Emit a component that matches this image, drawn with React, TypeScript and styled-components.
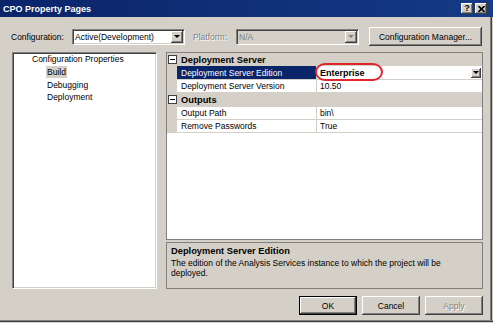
import React from "react";
import styled, { createGlobalStyle } from "styled-components";

const GlobalStyle = createGlobalStyle`
  html, body { margin: 0; padding: 0; background: #d4d0c8; overflow: hidden; }
  body { font-family: "Liberation Sans", Arial, sans-serif; font-size: 8.5px; color: #000; }
  * { box-sizing: border-box; }
`;

const raised = `
  background: #d4d0c8;
  box-shadow: inset -1px -1px #404040, inset 1px 1px #ffffff, inset -2px -2px #808080, inset 2px 2px #d4d0c8;
`;

const Window = styled.div`
  width: 493px;
  height: 323px;
  background: #d4d0c8;
  display: flex;
  flex-direction: column;
  box-shadow: inset 0 -1px #d4d0c8, inset 0 -2px #404040, inset 0 -3px #808080,
    inset -1px 0 #d4d0c8, inset -2px 0 #404040, inset -3px 0 #808080;
`;

const TitleBar = styled.div`
  height: 17px;
  flex: none;
  display: flex;
  align-items: center;
  justify-content: space-between;
  padding: 0 6px 0 3px;
  background: linear-gradient(90deg, #0a246a 0%, #153a86 100%);
`;

const Title = styled.span`
  color: #fff;
  font-weight: bold;
  font-size: 9px;
`;

const CaptionGroup = styled.div`
  display: flex;
  gap: 2px;
`;

const CaptionButton = styled.div`
  ${raised}
  width: 12px;
  height: 11px;
  display: flex;
  align-items: center;
  justify-content: center;
  font-weight: bold;
  font-size: 9px;
  line-height: 1;
`;

const Body = styled.div`
  flex: 1;
  display: flex;
  flex-direction: column;
  padding: 10px 10px 0 12px;
`;

const ConfigRow = styled.div`
  height: 19px;
  display: flex;
  align-items: center;
`;

const Label = styled.span<{ $disabled?: boolean; $width: number; $ml: number }>`
  width: ${(p) => p.$width}px;
  margin-left: ${(p) => p.$ml}px;
  color: ${(p) => (p.$disabled ? "#808080" : "#000")};
  text-shadow: ${(p) => (p.$disabled ? "1px 1px #ffffff" : "none")};
  white-space: nowrap;
`;

const Combo = styled.div<{ $disabled?: boolean; $width: number }>`
  width: ${(p) => p.$width}px;
  height: 16px;
  display: flex;
  align-items: center;
  padding-left: 2px;
  background: ${(p) => (p.$disabled ? "#d4d0c8" : "#fff")};
  color: ${(p) => (p.$disabled ? "#808080" : "#000")};
  border: 1px solid;
  border-color: #808080 #ffffff #ffffff #808080;
  box-shadow: inset 1px 1px #404040, inset -1px -1px #d4d0c8;
`;

const ComboText = styled.span`
  flex: 1;
  white-space: nowrap;
`;

const DropButton = styled.div<{ $size: number }>`
  ${raised}
  width: ${(p) => p.$size}px;
  height: ${(p) => p.$size}px;
  margin-right: 1px;
  display: flex;
  align-items: center;
  justify-content: center;
`;

const Arrow = styled.div<{ $disabled?: boolean }>`
  width: 0;
  height: 0;
  border-left: 3px solid transparent;
  border-right: 3px solid transparent;
  border-top: 3px solid ${(p) => (p.$disabled ? "#808080" : "#000")};
`;

const PushButton = styled.div<{ $width: number; $default?: boolean; $disabled?: boolean; $ml?: number }>`
  ${raised}
  width: ${(p) => p.$width}px;
  height: 19px;
  margin-left: ${(p) => p.$ml ?? 0}px;
  display: flex;
  align-items: center;
  justify-content: center;
  color: ${(p) => (p.$disabled ? "#808080" : "#000")};
  text-shadow: ${(p) => (p.$disabled ? "1px 1px #ffffff" : "none")};
  border: ${(p) => (p.$default ? "1px solid #000" : "none")};
  white-space: nowrap;
`;

const Main = styled.div`
  margin-top: 6px;
  height: 237px;
  display: flex;
  gap: 9px;
`;

const Tree = styled.div`
  width: 145px;
  background: #fff;
  border: 1px solid;
  border-color: #808080 #ffffff #ffffff #808080;
  box-shadow: inset 1px 1px #404040, inset -1px -1px #d4d0c8;
  padding-top: 0;
`;

const TreeItem = styled.div<{ $level: number }>`
  height: 12.8px;
  line-height: 12.8px;
  padding-left: ${(p) => (p.$level === 0 ? 18 : 33)}px;
`;

const TreeLabel = styled.span<{ $selected?: boolean }>`
  padding: 1px 1px;
  background: ${(p) => (p.$selected ? "#d4d0c8" : "transparent")};
`;

const RightCol = styled.div`
  flex: 1;
  display: flex;
  flex-direction: column;
  gap: 2px;
`;

const Grid = styled.div`
  position: relative;
  height: 188px;
  background: #fff;
  border: 1px solid #808080;
`;

const Row = styled.div`
  display: grid;
  grid-template-columns: 10px 140px 1fr;
  height: 13.4px;
`;

const Gutter = styled.div`
  background: #d4d0c8;
  display: flex;
  align-items: center;
  justify-content: center;
`;

const CategoryCell = styled.div`
  grid-column: 2 / 4;
  background: #d4d0c8;
  font-weight: bold;
  font-size: 9.3px;
  padding-left: 4px;
  display: flex;
  align-items: center;
`;

const NameCell = styled.div<{ $selected?: boolean }>`
  display: flex;
  align-items: center;
  padding-left: 4px;
  border-right: 1px solid #d4d0c8;
  border-bottom: 1px solid #d4d0c8;
  background: ${(p) => (p.$selected ? "#0a246a" : "#fff")};
  color: ${(p) => (p.$selected ? "#fff" : "#000")};
  white-space: nowrap;
`;

const ValueCell = styled.div<{ $bold?: boolean }>`
  display: flex;
  align-items: center;
  padding-left: 3px;
  border-bottom: 1px solid #d4d0c8;
  font-weight: ${(p) => (p.$bold ? "bold" : "normal")};
  font-size: ${(p) => (p.$bold ? "9px" : "8.5px")};
`;

const Highlight = styled.div`
  position: absolute;
  left: 148px;
  top: 10px;
  width: 68px;
  height: 18px;
  border: 2px solid #e0262b;
  border-radius: 10px / 9px;
  pointer-events: none;
`;

const Desc = styled.div`
  flex: 1;
  border: 1px solid #808080;
  padding: 3px 4px 0 4px;
`;

const DescTitle = styled.div`
  font-weight: bold;
  font-size: 9.3px;
  line-height: 11px;
  margin-bottom: 0.5px;
`;

const DescText = styled.div`
  max-width: 292px;
  line-height: 10.5px;
`;

const ButtonRow = styled.div`
  margin-top: 7px;
  display: flex;
  justify-content: flex-end;
  gap: 5px;
`;

const Expander = () => (
  <svg width="9" height="9" viewBox="0 0 9 9">
    <rect x="0.5" y="0.5" width="8" height="8" fill="#fff" stroke="#404040" />
    <line x1="2" y1="4.5" x2="7" y2="4.5" stroke="#000" />
  </svg>
);

const CloseIcon = () => (
  <svg width="7" height="6" viewBox="0 0 7 6">
    <path d="M0.5 0 L6.5 6 M6.5 0 L0.5 6" stroke="#000" strokeWidth="1.6" />
  </svg>
);

type Item = { name: string; value: string; selected?: boolean };
type Category = { title: string; items: Item[] };

const categories: Category[] = [
  {
    title: "Deployment Server",
    items: [
      { name: "Deployment Server Edition", value: "Enterprise", selected: true },
      { name: "Deployment Server Version", value: "10.50" },
    ],
  },
  {
    title: "Outputs",
    items: [
      { name: "Output Path", value: "bin\\" },
      { name: "Remove Passwords", value: "True" },
    ],
  },
];

export default function App() {
  return (
    <>
      <GlobalStyle />
      <Window>
        <TitleBar>
          <Title>CPO Property Pages</Title>
          <CaptionGroup>
            <CaptionButton>?</CaptionButton>
            <CaptionButton>
              <CloseIcon />
            </CaptionButton>
          </CaptionGroup>
        </TitleBar>
        <Body>
          <ConfigRow>
            <Label $width={61} $ml={-1}>Configuration:</Label>
            <Combo $width={113}>
              <ComboText>Active(Development)</ComboText>
              <DropButton $size={12}>
                <Arrow />
              </DropButton>
            </Combo>
            <Label $width={43} $ml={8} $disabled>
              Platform:
            </Label>
            <Combo $width={123} $disabled>
              <ComboText>N/A</ComboText>
              <DropButton $size={12}>
                <Arrow $disabled />
              </DropButton>
            </Combo>
            <PushButton $width={113} $ml={10}>
              Configuration Manager...
            </PushButton>
          </ConfigRow>
          <Main>
            <Tree>
              <TreeItem $level={0}>
                <TreeLabel>Configuration Properties</TreeLabel>
              </TreeItem>
              <TreeItem $level={1}>
                <TreeLabel $selected>Build</TreeLabel>
              </TreeItem>
              <TreeItem $level={1}>
                <TreeLabel>Debugging</TreeLabel>
              </TreeItem>
              <TreeItem $level={1}>
                <TreeLabel>Deployment</TreeLabel>
              </TreeItem>
            </Tree>
            <RightCol>
              <Grid>
                {categories.map((c) => (
                  <React.Fragment key={c.title}>
                    <Row>
                      <Gutter>
                        <Expander />
                      </Gutter>
                      <CategoryCell>{c.title}</CategoryCell>
                    </Row>
                    {c.items.map((it) => (
                      <Row key={it.name}>
                        <Gutter />
                        <NameCell $selected={it.selected}>{it.name}</NameCell>
                        <ValueCell $bold={it.selected}>
                          <ComboText>{it.value}</ComboText>
                          {it.selected && (
                            <DropButton $size={10}>
                              <Arrow />
                            </DropButton>
                          )}
                        </ValueCell>
                      </Row>
                    ))}
                  </React.Fragment>
                ))}
                <Highlight />
              </Grid>
              <Desc>
                <DescTitle>Deployment Server Edition</DescTitle>
                <DescText>
                  The edition of the Analysis Services instance to which the project will be deployed.
                </DescText>
              </Desc>
            </RightCol>
          </Main>
          <ButtonRow>
            <PushButton $width={58} $default>
              OK
            </PushButton>
            <PushButton $width={58}>Cancel</PushButton>
            <PushButton $width={58} $disabled>
              Apply
            </PushButton>
          </ButtonRow>
        </Body>
      </Window>
    </>
  );
}
